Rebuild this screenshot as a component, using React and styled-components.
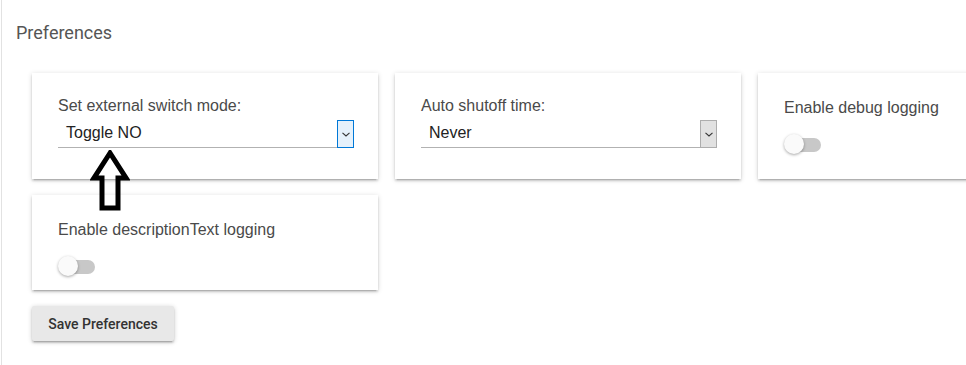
import React from 'react';
import styled, {createGlobalStyle} from 'styled-components';

const GlobalStyle = createGlobalStyle`
  html, body {
    margin: 0;
    padding: 0;
    overflow: hidden;
    background: #fff;
  }
  body {
    font-family: "Liberation Sans", Arial, sans-serif;
  }
`;

const Page = styled.div`
  position: relative;
  margin-left: 1px;
  min-height: 365px;
  border-left: 1px solid #e2e2e2;
  padding: 22px 0 0 14px;
  box-sizing: border-box;
`;

const Heading = styled.h2`
  margin: 0;
  font-family: Roboto, "Liberation Sans", sans-serif;
  font-size: 18px;
  font-weight: 400;
  line-height: 21px;
  color: #555;
`;

const Content = styled.div`
  padding: 30px 0 0 16px;
`;

const Grid = styled.div`
  display: grid;
  grid-template-columns: repeat(3, 346px);
  gap: 16px 17px;
  width: 1072px;
`;

const Card = styled.div`
  background: #fff;
  box-sizing: border-box;
  padding: ${p => (p.$toggle ? '26px 24px 13px 26px' : '24px 24px 31px 26px')};
  box-shadow: 0 2px 2px 0 rgba(0, 0, 0, 0.14), 0 3px 1px -2px rgba(0, 0, 0, 0.12), 0 1px 5px 0 rgba(0, 0, 0, 0.16);
`;

const Label = styled.div`
  font-size: 16px;
  line-height: 18px;
  color: #4a4a4a;
`;

const SelectField = styled.div`
  margin-top: 5px;
  display: flex;
  align-items: stretch;
  height: 28px;
`;

const SelectValue = styled.div`
  flex: 1;
  display: flex;
  align-items: center;
  padding-left: 8px;
  padding-bottom: 1px;
  font-size: 16px;
  color: #222;
  border-bottom: 1px solid #b2b2b2;
`;

const ArrowBox = styled.div`
  width: 15px;
  display: flex;
  align-items: center;
  justify-content: center;
  border: 1px solid ${p => (p.$focused ? '#0078d7' : '#adadad')};
  background: ${p => (p.$focused ? '#e5f1fb' : '#e1e1e1')};
`;

const ToggleWrap = styled.div`
  position: relative;
  margin-top: 17px;
  width: 37px;
  height: 21px;
`;

const Track = styled.div`
  position: absolute;
  left: 3px;
  top: 4px;
  width: 34px;
  height: 14px;
  border-radius: 7px;
  background: #c8c8c8;
`;

const Thumb = styled.div`
  position: absolute;
  left: 0;
  top: 0;
  width: 20px;
  height: 20px;
  border-radius: 50%;
  background: #fafafa;
  box-shadow: 0 1px 3px rgba(0, 0, 0, 0.35);
`;

const SaveButton = styled.button`
  margin-top: 16px;
  width: 142px;
  height: 35px;
  border: none;
  border-radius: 2px;
  background: #e8e8e8;
  font-family: Roboto, "Liberation Sans", sans-serif;
  font-size: 14px;
  font-weight: 500;
  color: #333;
  box-shadow: 0 2px 2px 0 rgba(0, 0, 0, 0.14), 0 3px 1px -2px rgba(0, 0, 0, 0.12), 0 1px 5px 0 rgba(0, 0, 0, 0.2);
`;

const Pointer = styled.svg`
  position: absolute;
  left: 88px;
  top: 150px;
`;

const Chevron = () => (
  <svg width="8" height="5" viewBox="0 0 8 5">
    <path d="M0.5 0.8 L4 4 L7.5 0.8" fill="none" stroke="#333" strokeWidth="1.1"/>
  </svg>
);

const SelectCard = ({label, value, focused}) => (
  <Card>
    <Label>{label}</Label>
    <SelectField>
      <SelectValue>{value}</SelectValue>
      <ArrowBox $focused={focused}><Chevron/></ArrowBox>
    </SelectField>
  </Card>
);

const ToggleCard = ({label}) => (
  <Card $toggle>
    <Label>{label}</Label>
    <ToggleWrap>
      <Track/>
      <Thumb/>
    </ToggleWrap>
  </Card>
);

const App = () => (
  <>
    <GlobalStyle/>
    <Page>
      <Heading>Preferences</Heading>
      <Content>
        <Grid>
          <SelectCard label="Set external switch mode:" value="Toggle NO" focused/>
          <SelectCard label="Auto shutoff time:" value="Never"/>
          <ToggleCard label="Enable debug logging"/>
          <ToggleCard label="Enable descriptionText logging"/>
        </Grid>
        <SaveButton>Save Preferences</SaveButton>
      </Content>
      <Pointer width="40" height="62" viewBox="0 0 40 62">
        <path d="M20 3 L4 28 L12 28 L12 58 L28 58 L28 28 L36 28 Z" fill="none" stroke="#000" strokeWidth="5" strokeLinejoin="miter"/>
      </Pointer>
    </Page>
  </>
);

export default App;
